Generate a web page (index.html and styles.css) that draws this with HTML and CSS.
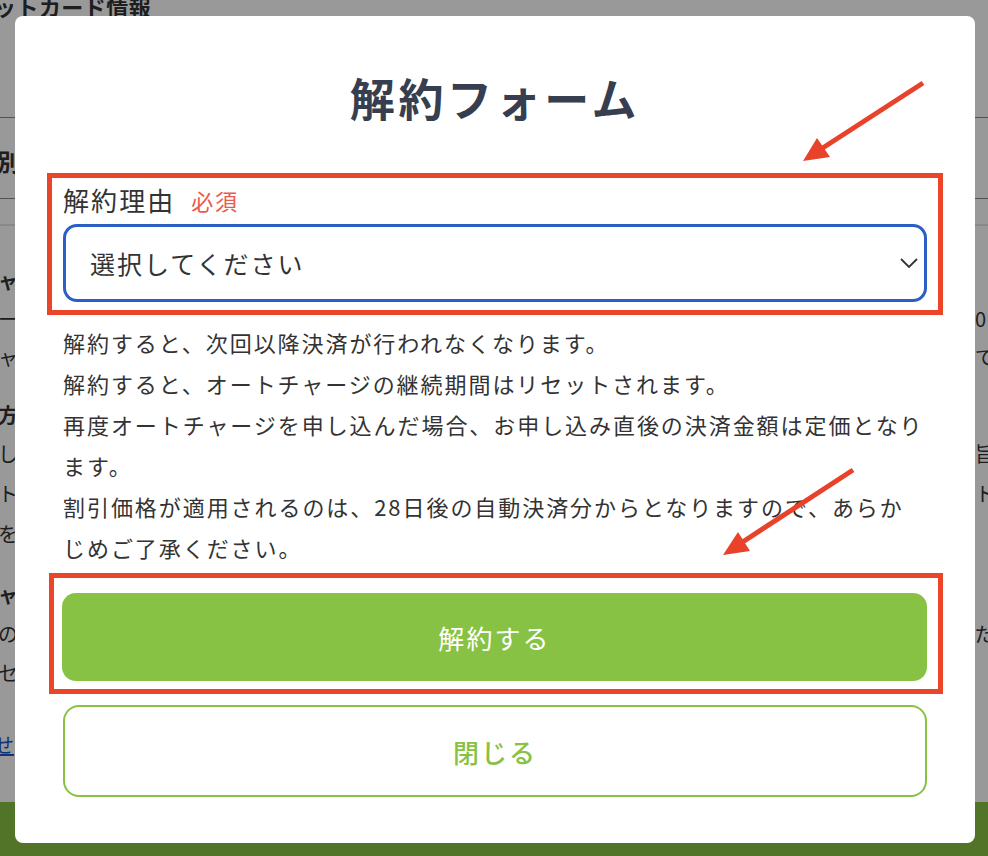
FILE: index.html
```html
<!DOCTYPE html>
<html lang="ja">
<head>
  <meta charset="UTF-8" />
  <meta name="viewport" content="width=device-width, initial-scale=1.0"/>
  <title>解約フォーム</title>
  <link rel="stylesheet" href="styles.css">
</head>
<body>

  <!-- page behind the dialog -->
  <div class="page">
    <div class="page-head">ットカード情報</div>
    <div class="page-rule rule-1"></div>
    <div class="page-tab">別</div>
    <div class="page-rule rule-2"></div>
    <div class="page-rule rule-3"></div>

    <div class="page-body">
      <div class="bg-row head first"><span class="bg-l">ャンセル</span><span class="bg-r"></span></div>
      <div class="bg-row"><span class="bg-l">ーは毎月</span><span class="bg-r">0</span></div>
      <div class="bg-row"><span class="bg-l">ャージの</span><span class="bg-r">で</span></div>

      <div class="bg-row head gap-b"><span class="bg-l">方法</span><span class="bg-r"></span></div>
      <div class="bg-row tall"><span class="bg-l">しくは</span><span class="bg-r">旨</span></div>
      <div class="bg-row tall"><span class="bg-l">トより</span><span class="bg-r">ト</span></div>
      <div class="bg-row tall"><span class="bg-l">をご確認</span><span class="bg-r"></span></div>

      <div class="bg-row head gap-c"><span class="bg-l">ャンセル後</span><span class="bg-r"></span></div>
      <div class="bg-row mid"><span class="bg-l">の決済</span><span class="bg-r">だ</span></div>
      <div class="bg-row mid"><span class="bg-l">セット</span><span class="bg-r"></span></div>

      <div class="bg-row gap-d"><a class="bg-link" href="#">せ</a></div>
    </div>

    <div class="page-foot"></div>
  </div>

  <!-- dialog -->
  <div class="overlay">
    <div class="modal">
      <h1 class="modal-title">解約フォーム</h1>

      <div class="mark-box field-box">
        <div class="field-label">解約理由<span class="req">必須</span></div>
        <div class="select">
          <span>選択してください</span>
          <svg width="18" height="10" viewBox="0 0 18 10"><polyline points="1,1 9,9 17,1" fill="none" stroke="#333" stroke-width="1.8"/></svg>
        </div>
      </div>

      <div class="notes">
        <p>解約すると、次回以降決済が行われなくなります。</p>
        <p>解約すると、オートチャージの継続期間はリセットされます。</p>
        <p>再度オートチャージを申し込んだ場合、お申し込み直後の決済金額は定価となります。</p>
        <p>割引価格が適用されるのは、28日後の自動決済分からとなりますので、あらかじめご了承ください。</p>
      </div>

      <div class="mark-box btn-box">
        <button class="btn-main">解約する</button>
      </div>
      <button class="btn-close">閉じる</button>
    </div>
  </div>

  <!-- annotation arrows -->
  <svg class="arrows" width="988" height="856" viewBox="0 0 988 856">
    <line x1="923" y1="83" x2="818" y2="151" stroke="#e8432a" stroke-width="5"/>
    <polygon points="803,161 817,138 830,157" fill="#e8432a"/>
    <line x1="853" y1="470" x2="738" y2="545" stroke="#e8432a" stroke-width="5"/>
    <polygon points="723,555 738,532 750,551" fill="#e8432a"/>
  </svg>

</body>
</html>
```

FILE: styles.css
```css
* {
  box-sizing: border-box;
}

body {
  margin: 0;
  font-family: "Noto Sans CJK JP", "Noto Sans", sans-serif;
  color: #333;
  overflow: hidden;
}

/* background page */
.page {
  height: 856px;
  display: flex;
  flex-direction: column;
  background: #fff;
  overflow: hidden;
}

.page-head {
  margin: -7px 0 0 -6px;
  font-size: 22px;
  font-weight: bold;
  line-height: 26px;
  letter-spacing: 0.02em;
}

.page-rule {
  height: 1px;
  background: #888;
}

.rule-1 {
  margin-top: 98px;
}

.page-tab {
  margin: 28px 0 0 -3px;
  font-size: 24px;
  font-weight: bold;
  line-height: 30px;
}

.rule-2 {
  margin-top: 22px;
}

.rule-3 {
  margin-top: 25px;
  height: 2px;
  background: #e4e4e4;
}

.page-body {
  flex: 1;
  font-size: 20px;
}

.bg-row {
  display: flex;
  height: 38px;
  line-height: 38px;
  white-space: nowrap;
}

.bg-row.tall {
  height: 40px;
  line-height: 40px;
}

.bg-row.mid {
  height: 39px;
  line-height: 39px;
}

.bg-row.head {
  font-weight: bold;
}

.first {
  margin-top: 36px;
}

.gap-b {
  margin-top: 20px;
}

.gap-c {
  margin-top: 22px;
}

.gap-d {
  margin-top: 34px;
}

.bg-l {
  flex: 0 0 17px;
  overflow: hidden;
  margin-left: -2px;
}

.bg-r {
  flex: 1;
  margin-left: 960px;
  overflow: hidden;
}

.bg-link {
  color: #1c55c9;
  margin-left: -6px;
}

.page-foot {
  height: 54px;
  background: #88c245;
}

/* dialog */
.overlay {
  position: fixed;
  inset: 0;
  background: rgba(0, 0, 0, 0.4);
}

.modal {
  margin: 16px 13px 0 15px;
  height: 827px;
  padding: 50px 48px 0;
  background: #fff;
  border-radius: 8px;
}

.modal * {
  letter-spacing: 0.08em;
}

.modal-title {
  margin: 0;
  text-align: center;
  font-size: 45px;
  line-height: 64px;
  font-weight: bold;
  color: #363e4f;
}

.mark-box {
  border: 5px solid #ea4528;
}

.field-box {
  margin: 43px -16px 0;
  padding: 5px 11px 8px;
}

.field-label {
  font-size: 26px;
  line-height: 34px;
  display: flex;
  align-items: center;
}

.req {
  margin-left: 16px;
  font-size: 22px;
  color: #e95a4f;
}

.select {
  margin-top: 7px;
  height: 78px;
  border: 3px solid #2b5fc7;
  border-radius: 14px;
  padding: 0 6px 0 24px;
  display: flex;
  align-items: center;
  justify-content: space-between;
  font-size: 25px;
}

.notes {
  margin-top: 7px;
  font-size: 22px;
  line-height: 41px;
}

.notes p {
  margin: 0;
  letter-spacing: 1.94px;
}

.btn-box {
  margin: 5px -16px 0 -14px;
  padding: 15px 11px 8px 8px;
}

.btn-main {
  display: block;
  width: 100%;
  height: 88px;
  border: none;
  border-radius: 14px;
  background: #88c245;
  color: #fff;
  font-family: inherit;
  font-size: 26px;
  cursor: pointer;
}

.btn-close {
  display: block;
  width: 100%;
  height: 92px;
  margin-top: 11px;
  border: 2px solid #88c245;
  border-radius: 16px;
  background: #fff;
  color: #88c245;
  font-family: inherit;
  font-size: 26px;
  font-weight: 500;
  cursor: pointer;
}

/* annotation arrows */
.arrows {
  position: fixed;
  top: 0;
  left: 0;
  pointer-events: none;
}
```
